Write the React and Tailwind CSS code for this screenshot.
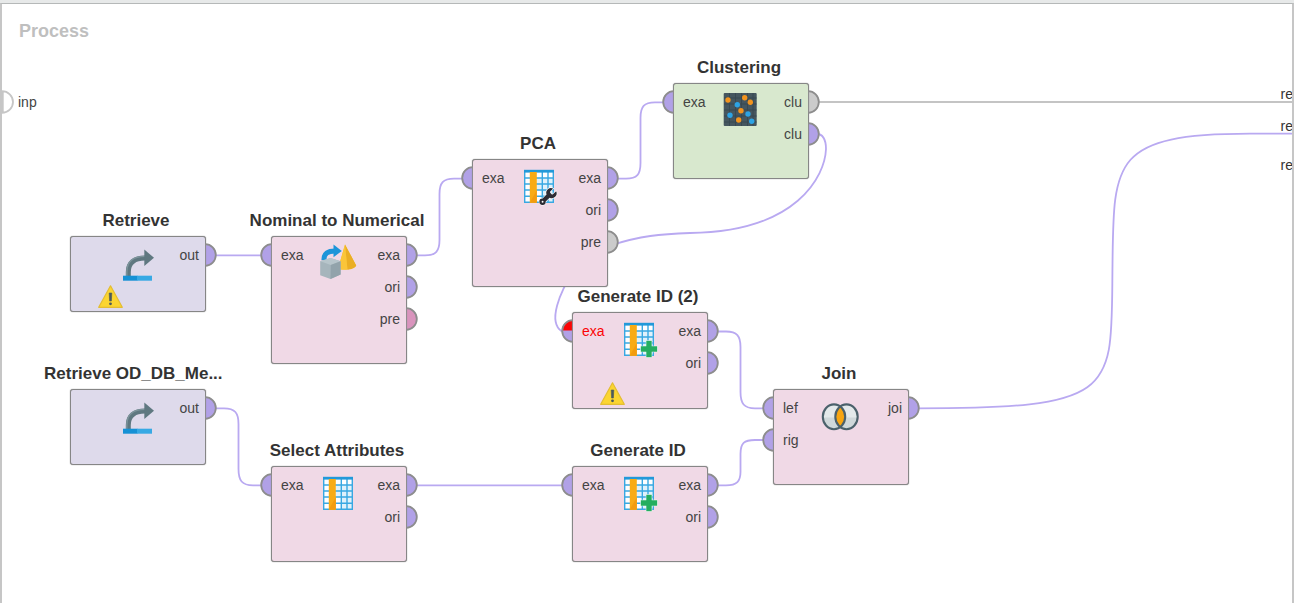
import React from "react";

const WIRE = "#b9a9f1";

const portFill = {
  data: "#b1a1e7",
  model: "#d994bd",
  idle: "#cbcbcb",
};

function Port({ side, kind }) {
  const left = side === "left";
  return (
    <svg
      viewBox="0 0 12 24"
      className={
        left
          ? "absolute -left-3 top-1 h-6 w-3"
          : "absolute -right-3 top-1 h-6 w-3 -scale-x-100"
      }
      aria-hidden="true"
    >
      <path
        d="M11.4 1.2A10.6 10.8 0 0 0 11.4 22.8Z"
        fill={kind === "error" ? portFill.data : portFill[kind]}
      />
      {kind === "error" && <path d="M11.4 1.2A10.6 10.8 0 0 0 .9 11.5H11.4Z" fill="#fb0505" />}
      <path d="M11.4 1.2V22.8" stroke="#8d8d8d" strokeWidth="1" />
      <path d="M11.8 1.2A10.6 10.8 0 0 0 11.8 22.8" fill="none" stroke="#8d8d8d" strokeWidth="1.8" />
    </svg>
  );
}

function RetrieveIcon() {
  return (
    <>
      <path d="M10.3 35V31C10.3 21.5 16.5 17 27 17" fill="none" stroke="#5f7880" strokeWidth="5" />
      <path d="M8.8 35V31C8.8 20.5 15.5 15.4 27 15.4" fill="none" stroke="#7d949b" strokeWidth="1.4" />
      <path d="M26.3 8.5L36 16.8L26.3 25Z" fill="#5f7880" />
      <rect x="5" y="34.7" width="14.5" height="5" fill="#1691d5" />
      <rect x="19" y="34.7" width="15" height="5" fill="#37a9e4" />
    </>
  );
}

function ConvertIcon() {
  return (
    <>
      <path d="M5 19C4.6 12.3 9 10 16 10" fill="none" stroke="#1d95d9" strokeWidth="5" />
      <path d="M14.5 3.6L22.8 10L14.5 16.2Z" fill="#1d95d9" />
      <path d="M26 3.5L37.2 24.5C36 27.5 28 29.5 19 28Z" fill="#f4bd2a" />
      <path d="M26 3.5L37.2 24.5C36 27.2 32 28.4 28.5 28.8Z" fill="#eaae24" />
      <path d="M26 3.5L28.5 28.6C26 29 22 28.8 19 28Z" fill="#fac539" />
      <path d="M1.2 20.2L11.5 17L21.6 20.2V33.5L11.5 38L1.2 34.2Z" fill="#a6b5bc" />
      <path d="M1.2 20.2L11.5 17L21.6 20.2L11.8 24Z" fill="#b7c5cb" />
      <path d="M11.8 24L21.6 20.2V33.5L11.5 38Z" fill="#92a3ab" />
    </>
  );
}

function TableIcon() {
  return (
    <>
      <rect x="4" y="6" width="30" height="33" fill="#fdfeff" />
      <path d="M17 14H34V38H22V26H17Z" fill="#dff1fb" />
      <path
        d="M4.7 7V38.3H33.3V7M22.3 8V38M28 8V38M4 14H34M4 20H34M4 26H34M4 32.2H34"
        fill="none"
        stroke="#38a8e2"
        strokeWidth="1.4"
      />
      <rect x="4" y="5.8" width="30" height="2.8" fill="#2299d9" />
      <rect x="9.8" y="8" width="7" height="30.8" fill="#f8ab15" />
      <path d="M9.8 38.8L16.8 26V38.8Z" fill="#f39c0e" />
    </>
  );
}

function TableToolIcon() {
  return (
    <>
      <TableIcon />
      <g transform="translate(17.6 22.2) scale(.86)">
        <path
          d="M14.7 6.3a1 1 0 0 0 0 1.4l1.6 1.6a1 1 0 0 0 1.4 0l3.9-3.4a5.6 5.6 0 0 1-7.6 7.4l-4.6 4.5a3.7 3.7 0 1 1-3.6-3.4l4.6-4.7a5.6 5.6 0 0 1 7.7-7z"
          fill="#2c2c34"
          stroke="#ffffff"
          strokeWidth="1.4"
          paintOrder="stroke"
        />
        <circle cx="5.8" cy="18" r="1.1" fill="#ffffff" />
      </g>
    </>
  );
}

function TableAddIcon() {
  return (
    <>
      <TableIcon />
      <path
        d="M26.3 23.8H31.7V29.3H37.2V34.7H31.7V40.2H26.3V34.7H20.8V29.3H26.3Z"
        fill="#24ae60"
        stroke="#ffffff"
        strokeWidth="1"
        paintOrder="stroke"
      />
    </>
  );
}

function ClusterIcon() {
  const orange = [[7, 12], [23.7, 9.7], [29.3, 14.3], [20, 22.7], [17.7, 32]];
  const blue = [[16.3, 16.7], [9, 27.3], [27, 26], [30.7, 33.3]];
  return (
    <>
      <rect x="2.7" y="5" width="33" height="33" rx="1" fill="#45565f" />
      <path
        d="M8.5 5V38M14.5 5V38M20.5 5V38M26.5 5V38M32 5V38M3 10H35.5M3 16H35.5M3 22H35.5M3 28H35.5M3 34H35.5"
        stroke="#394952"
        strokeWidth="1"
      />
      {orange.map(([x, y]) => (
        <circle key={x} cx={x} cy={y} r="2.7" fill="#f3941e" />
      ))}
      {blue.map(([x, y]) => (
        <circle key={x} cx={x} cy={y} r="2.7" fill="#2da3e4" />
      ))}
    </>
  );
}

function JoinIcon() {
  return (
    <>
      <ellipse cx="13" cy="22.8" rx="11.2" ry="12.4" fill="#e3e9ea" />
      <ellipse cx="25.5" cy="22.8" rx="11.2" ry="12.4" fill="#e3e9ea" />
      <path d="M2.2 23.5H36.3C35.7 31 30.7 35 25.7 35.1H12.7C6.7 35 2.7 30 2.2 23.5Z" fill="#cfd8da" />
      <path d="M19.2 12.6C25.7 18 25.7 28 19.2 33C12.7 28 12.7 18 19.2 12.6Z" fill="#f7a510" />
      <ellipse cx="13" cy="22.8" rx="11.2" ry="12.4" fill="none" stroke="#4b616b" strokeWidth="2.1" />
      <ellipse cx="25.5" cy="22.8" rx="11.2" ry="12.4" fill="none" stroke="#4b616b" strokeWidth="2.1" />
    </>
  );
}

function WarningIcon() {
  return (
    <svg viewBox="0 0 25 23" className="absolute bottom-[3px] left-[27px] h-[23px] w-[25px]" role="img" aria-label="Warning">
      <path d="M12.5 .8L24.3 22.3H.7Z" fill="#fbd531" stroke="#e3bd33" strokeWidth="1.2" strokeLinejoin="round" />
      <path d="M11.2 8H13.8L13.4 16H11.6Z" fill="#4c5a5c" stroke="#4c5a5c" strokeWidth=".6" />
      <circle cx="12.5" cy="18.8" r="1.4" fill="#4c5a5c" />
    </svg>
  );
}

const pink = "bg-[#f0d9e6]";
const lavender = "bg-[#dedaeb]";
const green = "bg-[#d8e8ce]";

const operators = [
  {
    title: "Clustering", place: "left-[645px] top-[52px]", size: "min-h-[96px]", tone: green, Icon: ClusterIcon,
    inputs: [["exa", "data"]], outputs: [["clu", "idle"], ["clu", "data"]],
  },
  {
    title: "PCA", place: "left-[444px] top-[128px]", size: "min-h-[128px]", tone: pink, Icon: TableToolIcon,
    inputs: [["exa", "data"]], outputs: [["exa", "data"], ["ori", "data"], ["pre", "idle"]],
  },
  {
    title: "Retrieve", place: "left-[42px] top-[205px]", size: "min-h-[76px]", tone: lavender, Icon: RetrieveIcon,
    inputs: [], outputs: [["out", "data"]], warning: true,
  },
  {
    title: "Nominal to Numerical", place: "left-[243px] top-[205px]", size: "min-h-[128px]", tone: pink, Icon: ConvertIcon,
    inputs: [["exa", "data"]], outputs: [["exa", "data"], ["ori", "data"], ["pre", "model"]],
  },
  {
    title: "Generate ID (2)", place: "left-[544px] top-[281px]", size: "min-h-[97px]", tone: pink, Icon: TableAddIcon,
    inputs: [["exa", "error"]], outputs: [["exa", "data"], ["ori", "data"]], warning: true,
  },
  {
    title: "Retrieve OD_DB_Me...", place: "left-[42px] top-[358px]", size: "min-h-[76px]", tone: lavender, Icon: RetrieveIcon,
    inputs: [], outputs: [["out", "data"]], shortened: true,
  },
  {
    title: "Select Attributes", place: "left-[243px] top-[435px]", size: "min-h-[96px]", tone: pink, Icon: TableIcon,
    inputs: [["exa", "data"]], outputs: [["exa", "data"], ["ori", "data"]],
  },
  {
    title: "Generate ID", place: "left-[544px] top-[435px]", size: "min-h-[96px]", tone: pink, Icon: TableAddIcon,
    inputs: [["exa", "data"]], outputs: [["exa", "data"], ["ori", "data"]],
  },
  {
    title: "Join", place: "left-[745px] top-[358px]", size: "min-h-[96px]", tone: pink, Icon: JoinIcon,
    inputs: [["lef", "data"], ["rig", "data"]], outputs: [["joi", "data"]],
  },
];

function Operator({ title, place, size, tone, Icon, inputs, outputs, warning, shortened }) {
  return (
    <section className={`absolute w-[184px] ${place}`}>
      <h2
        className={`mb-[3px] h-6 whitespace-nowrap text-[17px] leading-6 font-bold text-[#333333] ${
          shortened ? "text-left" : "text-center"
        }`}
      >
        {title}
      </h2>
      <div className={`relative ml-[26px] flex w-[136px] rounded-[3px] border border-[#868686] pt-[2px] shadow-[0_0_1px_#666666] ${size} ${tone}`}>
        <ul className="w-[47px]">
          {inputs.map(([name, kind], i) => (
            <li key={i} className="relative flex h-8 items-center pl-[9px]">
              <Port side="left" kind={kind} />
              <span className={kind === "error" ? "text-[#fb0505]" : "text-[#444444]"}>{name}</span>
            </li>
          ))}
        </ul>
        <svg viewBox="0 0 40 42" className="mt-[2px] h-[42px] w-10 shrink-0" aria-hidden="true">
          <Icon />
        </svg>
        <ul className="grow">
          {outputs.map(([name, kind], i) => (
            <li key={i} className="relative flex h-8 items-center justify-end pr-[6px] text-[#444444]">
              {name}
              <Port side="right" kind={kind} />
            </li>
          ))}
        </ul>
        {warning && <WarningIcon />}
      </div>
    </section>
  );
}

function Wires() {
  return (
    <svg
      viewBox="2 4 1290 599"
      className="absolute top-0 left-0 h-[599px] w-[1290px]"
      fill="none"
      stroke={WIRE}
      strokeWidth="1.8"
      aria-hidden="true"
    >
      <path d="M817 102H1292" stroke="#c4c4c4" />
      <path d="M215 255.3H262" />
      <path d="M416 255.3H425C436 255.3 439.5 251 439.5 240V194C439.5 183 443 178.7 454 178.7H462" />
      <path d="M616 178.7H626C637 178.7 640.5 174.5 640.5 163V118C640.5 106.5 644 102.3 655 102.3H663" />
      <path d="M816 133.5C824 134 826 141 826 149C825 176 797 232 690 233C660 234 640 236 612 245" />
      <path d="M574 270C560 292 547 322 562 331.5" />
      <path d="M717 331.5H726C737 331.5 740.5 336 740.5 347V392C740.5 403.5 744 408.3 755 408.3H764" />
      <path d="M215 408.3H224C235 408.3 238.5 413 238.5 424V469C238.5 480.5 242 485.3 253 485.3H262" />
      <path d="M416 485.3H562" />
      <path d="M717 485.3H726C737 485.3 740.5 481 740.5 472V454C740.5 443 744 440 755 440H764" />
      <path d="M917 408.3C1122 408.3 1111 392 1112.5 265C1113.5 160 1113 134 1250 133.7H1292" />
    </svg>
  );
}

export default function App() {
  return (
    <div className="flex min-h-screen flex-col bg-[#e7e9e9] pt-[3px] font-['Liberation_Sans',Arial,sans-serif] text-[14px] leading-5">
      <main className="relative grow overflow-hidden border-x-2 border-t border-x-[#c6c6c6] border-t-[#b5b8b8] bg-white">
        <h1 className="pt-[15px] pl-[17px] text-[18px] leading-6 font-bold text-[#bfbfbf]">Process</h1>
        <Wires />
        <div className="absolute top-[86px] left-0 flex items-center gap-1 text-[#444444]">
          <svg viewBox="0 0 12 24" className="h-6 w-3" aria-hidden="true">
            <path d="M0 1.2A11 10.8 0 0 1 0 22.8M.8 1.5V22.5" fill="none" stroke="#c6c6c6" strokeWidth="1.8" />
          </svg>
          <span>inp</span>
        </div>
        <span className="absolute top-[80px] -right-px text-[#333333]">re</span>
        <span className="absolute top-[112px] -right-px text-[#333333]">re</span>
        <span className="absolute top-[151px] -right-px text-[#333333]">re</span>
        {operators.map((op) => (
          <Operator key={op.title} {...op} />
        ))}
      </main>
    </div>
  );
}
